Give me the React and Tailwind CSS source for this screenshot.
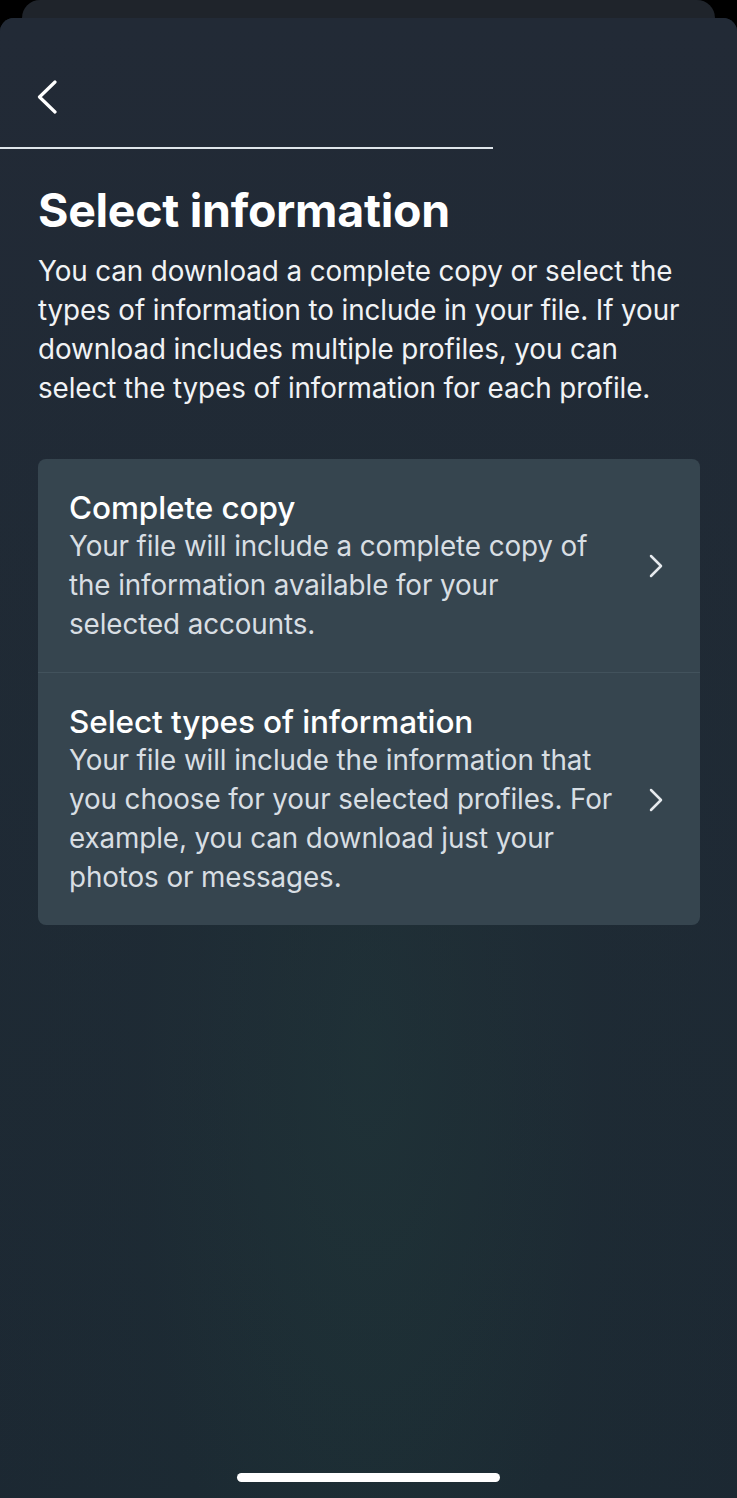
import React from 'react'

const Chevron = ({ className }) => (
  <svg viewBox="0 0 16 24" className={className} fill="none" stroke="currentColor" strokeWidth="2.5" strokeLinecap="round" strokeLinejoin="round">
    <path d="M3 2 L13 12 L3 22" />
  </svg>
)

const Option = ({ title, desc, last }) => (
  <div className={`flex items-center justify-between pl-[31px] pr-[36px] pt-[29px] pb-[28px] ${last ? '' : 'border-b border-[#42525c]'}`}>
    <div className="w-[545px]">
      <div className="text-[31.5px] leading-[39px] font-medium text-white tracking-[-0.1px]">{title}</div>
      <div className="text-[27.8px] leading-[39px] text-[#d8dee3] tracking-[-0.1px]">{desc}</div>
    </div>
    <Chevron className="w-[16px] h-[24px] text-[#e6eaee]" />
  </div>
)

export default function App() {
  return (
    <div className="w-[737px] h-[1498px] bg-black overflow-hidden flex flex-col" style={{ fontFamily: 'Inter, "Noto Sans", sans-serif' }}>
      <div className="mx-[22px] h-[18px] shrink-0 rounded-t-[18px] bg-[#1f242b]" />
      <div className="flex-1 rounded-t-[14px] bg-[radial-gradient(ellipse_at_50%_70%,#1e3437_0%,#1c2a33_45%,#1c2732_100%)] relative flex flex-col">
        <div className="absolute inset-0 rounded-t-[14px] bg-gradient-to-b from-[#222a36] via-[#212b36]/60 to-transparent pointer-events-none" />
        <div className="relative flex flex-col">
          <div className="h-[129px] flex items-center pl-[36px] pt-[28px]">
            <svg viewBox="0 0 22 34" className="w-[22px] h-[34px] text-white" fill="none" stroke="currentColor" strokeWidth="3.2" strokeLinecap="round" strokeLinejoin="round">
              <path d="M19 2 L3.5 17 L19 32" />
            </svg>
          </div>
          <div className="w-[493px] h-[2px] bg-[#dfe5ea]" />
          <div className="px-[38px]">
            <h1 className="mt-[35px] text-[46.5px] leading-[52px] font-bold text-white tracking-[-0.3px]">Select information</h1>
            <p className="mt-[16px] w-[648px] text-[27.8px] leading-[39px] text-[#f1f3f5] tracking-[-0.1px]">
              You can download a complete copy or select the types of information to include in your file. If your download includes multiple profiles, you can select the types of information for each profile.
            </p>
            <div className="mt-[51px] rounded-[8px] bg-[#36454f] w-[662px]">
              <Option
                title="Complete copy"
                desc="Your file will include a complete copy of the information available for your selected accounts."
              />
              <Option
                title="Select types of information"
                desc="Your file will include the information that you choose for your selected profiles. For example, you can download just your photos or messages."
                last
              />
            </div>
          </div>
        </div>
        <div className="flex-1" />
        <div className="relative flex justify-center pb-[16px]">
          <div className="w-[263px] h-[9px] rounded-full bg-white" />
        </div>
      </div>
    </div>
  )
}
